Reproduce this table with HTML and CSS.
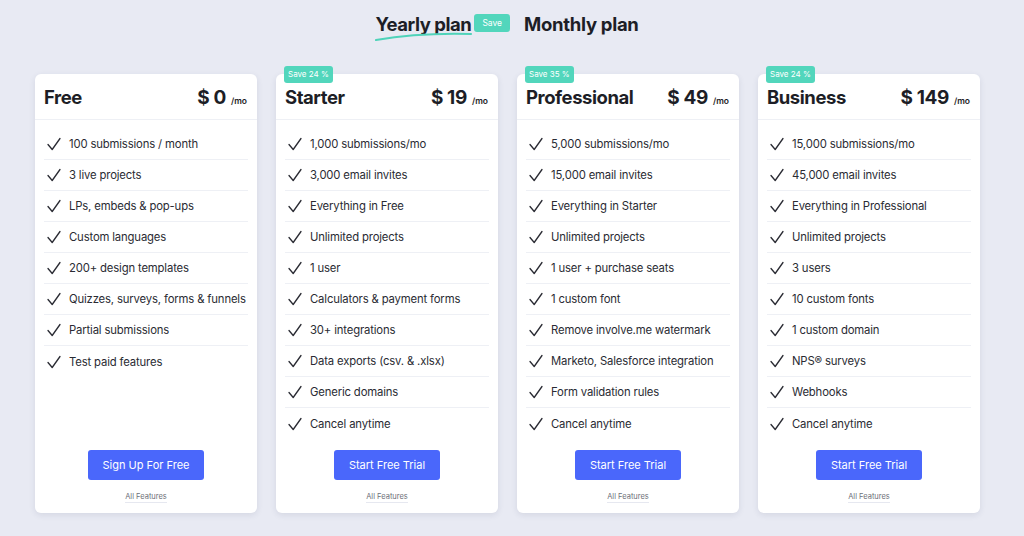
FILE: index.html
```html
<!DOCTYPE html>
<html>
<head>
<meta charset="utf-8">
<link rel="stylesheet" href="styles.css">
</head>
<body>
<div class="page">
  <div class="toggle">
    <div class="opt active">
      <span class="opt-label">Yearly plan</span>
      <svg class="swoosh" width="98" height="10" viewBox="0 0 98 10"><path d="M1 8 C 30 3, 60 1, 96 2" fill="none" stroke="#4fd3b9" stroke-width="2.2" stroke-linecap="round"/></svg>
    </div>
    <span class="save-pill">Save</span>
    <div class="opt"><span class="opt-label">Monthly plan</span></div>
  </div>

  <div class="cards">
    <div class="card">
      <div class="card-head">
        <span class="plan">Free</span>
        <span class="price">$ 0 <small>/mo</small></span>
      </div>
      <ul class="features">
        <li><svg class="chk" viewBox="0 0 14 14"><path d="M1 7.5 L5.2 12.5 L13 1.5"/></svg>100 submissions / month</li>
        <li><svg class="chk" viewBox="0 0 14 14"><path d="M1 7.5 L5.2 12.5 L13 1.5"/></svg>3 live projects</li>
        <li><svg class="chk" viewBox="0 0 14 14"><path d="M1 7.5 L5.2 12.5 L13 1.5"/></svg>LPs, embeds &amp; pop-ups</li>
        <li><svg class="chk" viewBox="0 0 14 14"><path d="M1 7.5 L5.2 12.5 L13 1.5"/></svg>Custom languages</li>
        <li><svg class="chk" viewBox="0 0 14 14"><path d="M1 7.5 L5.2 12.5 L13 1.5"/></svg>200+ design templates</li>
        <li><svg class="chk" viewBox="0 0 14 14"><path d="M1 7.5 L5.2 12.5 L13 1.5"/></svg>Quizzes, surveys, forms &amp; funnels</li>
        <li><svg class="chk" viewBox="0 0 14 14"><path d="M1 7.5 L5.2 12.5 L13 1.5"/></svg>Partial submissions</li>
        <li><svg class="chk" viewBox="0 0 14 14"><path d="M1 7.5 L5.2 12.5 L13 1.5"/></svg>Test paid features</li>
      </ul>
      <div class="card-foot">
        <a class="btn">Sign Up For Free</a>
        <a class="all">All Features</a>
      </div>
    </div>

    <div class="card">
      <span class="badge">Save 24 %</span>
      <div class="card-head">
        <span class="plan">Starter</span>
        <span class="price">$ 19 <small>/mo</small></span>
      </div>
      <ul class="features">
        <li><svg class="chk" viewBox="0 0 14 14"><path d="M1 7.5 L5.2 12.5 L13 1.5"/></svg>1,000 submissions/mo</li>
        <li><svg class="chk" viewBox="0 0 14 14"><path d="M1 7.5 L5.2 12.5 L13 1.5"/></svg>3,000 email invites</li>
        <li><svg class="chk" viewBox="0 0 14 14"><path d="M1 7.5 L5.2 12.5 L13 1.5"/></svg>Everything in Free</li>
        <li><svg class="chk" viewBox="0 0 14 14"><path d="M1 7.5 L5.2 12.5 L13 1.5"/></svg>Unlimited projects</li>
        <li><svg class="chk" viewBox="0 0 14 14"><path d="M1 7.5 L5.2 12.5 L13 1.5"/></svg>1 user</li>
        <li><svg class="chk" viewBox="0 0 14 14"><path d="M1 7.5 L5.2 12.5 L13 1.5"/></svg>Calculators &amp; payment forms</li>
        <li><svg class="chk" viewBox="0 0 14 14"><path d="M1 7.5 L5.2 12.5 L13 1.5"/></svg>30+ integrations</li>
        <li><svg class="chk" viewBox="0 0 14 14"><path d="M1 7.5 L5.2 12.5 L13 1.5"/></svg>Data exports (csv. &amp; .xlsx)</li>
        <li><svg class="chk" viewBox="0 0 14 14"><path d="M1 7.5 L5.2 12.5 L13 1.5"/></svg>Generic domains</li>
        <li><svg class="chk" viewBox="0 0 14 14"><path d="M1 7.5 L5.2 12.5 L13 1.5"/></svg>Cancel anytime</li>
      </ul>
      <div class="card-foot">
        <a class="btn">Start Free Trial</a>
        <a class="all">All Features</a>
      </div>
    </div>

    <div class="card">
      <span class="badge">Save 35 %</span>
      <div class="card-head">
        <span class="plan">Professional</span>
        <span class="price">$ 49 <small>/mo</small></span>
      </div>
      <ul class="features">
        <li><svg class="chk" viewBox="0 0 14 14"><path d="M1 7.5 L5.2 12.5 L13 1.5"/></svg>5,000 submissions/mo</li>
        <li><svg class="chk" viewBox="0 0 14 14"><path d="M1 7.5 L5.2 12.5 L13 1.5"/></svg>15,000 email invites</li>
        <li><svg class="chk" viewBox="0 0 14 14"><path d="M1 7.5 L5.2 12.5 L13 1.5"/></svg>Everything in Starter</li>
        <li><svg class="chk" viewBox="0 0 14 14"><path d="M1 7.5 L5.2 12.5 L13 1.5"/></svg>Unlimited projects</li>
        <li><svg class="chk" viewBox="0 0 14 14"><path d="M1 7.5 L5.2 12.5 L13 1.5"/></svg>1 user + purchase seats</li>
        <li><svg class="chk" viewBox="0 0 14 14"><path d="M1 7.5 L5.2 12.5 L13 1.5"/></svg>1 custom font</li>
        <li><svg class="chk" viewBox="0 0 14 14"><path d="M1 7.5 L5.2 12.5 L13 1.5"/></svg>Remove involve.me watermark</li>
        <li><svg class="chk" viewBox="0 0 14 14"><path d="M1 7.5 L5.2 12.5 L13 1.5"/></svg>Marketo, Salesforce integration</li>
        <li><svg class="chk" viewBox="0 0 14 14"><path d="M1 7.5 L5.2 12.5 L13 1.5"/></svg>Form validation rules</li>
        <li><svg class="chk" viewBox="0 0 14 14"><path d="M1 7.5 L5.2 12.5 L13 1.5"/></svg>Cancel anytime</li>
      </ul>
      <div class="card-foot">
        <a class="btn">Start Free Trial</a>
        <a class="all">All Features</a>
      </div>
    </div>

    <div class="card">
      <span class="badge">Save 24 %</span>
      <div class="card-head">
        <span class="plan">Business</span>
        <span class="price">$ 149 <small>/mo</small></span>
      </div>
      <ul class="features">
        <li><svg class="chk" viewBox="0 0 14 14"><path d="M1 7.5 L5.2 12.5 L13 1.5"/></svg>15,000 submissions/mo</li>
        <li><svg class="chk" viewBox="0 0 14 14"><path d="M1 7.5 L5.2 12.5 L13 1.5"/></svg>45,000 email invites</li>
        <li><svg class="chk" viewBox="0 0 14 14"><path d="M1 7.5 L5.2 12.5 L13 1.5"/></svg>Everything in Professional</li>
        <li><svg class="chk" viewBox="0 0 14 14"><path d="M1 7.5 L5.2 12.5 L13 1.5"/></svg>Unlimited projects</li>
        <li><svg class="chk" viewBox="0 0 14 14"><path d="M1 7.5 L5.2 12.5 L13 1.5"/></svg>3 users</li>
        <li><svg class="chk" viewBox="0 0 14 14"><path d="M1 7.5 L5.2 12.5 L13 1.5"/></svg>10 custom fonts</li>
        <li><svg class="chk" viewBox="0 0 14 14"><path d="M1 7.5 L5.2 12.5 L13 1.5"/></svg>1 custom domain</li>
        <li><svg class="chk" viewBox="0 0 14 14"><path d="M1 7.5 L5.2 12.5 L13 1.5"/></svg>NPS® surveys</li>
        <li><svg class="chk" viewBox="0 0 14 14"><path d="M1 7.5 L5.2 12.5 L13 1.5"/></svg>Webhooks</li>
        <li><svg class="chk" viewBox="0 0 14 14"><path d="M1 7.5 L5.2 12.5 L13 1.5"/></svg>Cancel anytime</li>
      </ul>
      <div class="card-foot">
        <a class="btn">Start Free Trial</a>
        <a class="all">All Features</a>
      </div>
    </div>
  </div>
</div>
</body>
</html>
```

FILE: styles.css
```css
* { box-sizing: border-box; }
html, body { margin: 0; padding: 0; }
body {
  background: #e8eaf3;
  font-family: Inter, "Noto Sans", sans-serif;
  color: #1d1e26;
  width: 1024px;
  height: 536px;
  overflow: hidden;
}
.page { padding-top: 12px; }

.toggle {
  display: flex;
  align-items: flex-start;
  justify-content: center;
  height: 62px;
  padding-right: 10px;
}
.opt { position: relative; }
.opt-label {
  display: block;
  font-size: 18.5px;
  font-weight: 700;
  letter-spacing: -0.45px;
  line-height: 24px;
  color: #1d1e26;
}
.opt:last-child .opt-label { letter-spacing: -0.3px; }
.swoosh { position: absolute; left: 0; top: 20px; }
.save-pill {
  margin: 2px 14px 0 3px;
  background: #52d6bc;
  color: #fff;
  font-size: 8.5px;
  line-height: 18px;
  height: 18px;
  padding: 0 8px;
  border-radius: 3px;
}

.cards {
  display: flex;
  gap: 19px;
  margin-left: 35px;
  align-items: stretch;
}
.card {
  position: relative;
  width: 222px;
  background: #fff;
  border-radius: 6px;
  box-shadow: 0 2px 6px rgba(40, 50, 90, 0.10);
  display: flex;
  flex-direction: column;
}
.badge {
  position: absolute;
  top: -8px;
  left: 8px;
  background: #52d6bc;
  color: #fff;
  font-size: 8px;
  line-height: 17px;
  height: 17px;
  padding: 0 4px;
  border-radius: 3px;
}
.card-head {
  height: 46px;
  display: flex;
  align-items: center;
  justify-content: space-between;
  padding: 1px 10px 0 9px;
  border-bottom: 1px solid #eef0f5;
}
.plan {
  font-size: 18.5px;
  font-weight: 700;
  letter-spacing: -0.45px;
}
.price {
  font-size: 19px;
  font-weight: 700;
  letter-spacing: -0.4px;
}
.price small {
  font-size: 8.5px;
  font-weight: 600;
  letter-spacing: 0;
  margin-left: 1px;
}

.features {
  list-style: none;
  margin: 0;
  padding: 9px 9px 0;
  flex: 1;
}
.features li {
  height: 31px;
  display: flex;
  align-items: center;
  font-size: 11.3px;
  letter-spacing: -0.15px;
  white-space: nowrap;
  color: #2a2b33;
  border-bottom: 1px solid #eef0f5;
}
.features li:last-child { border-bottom: none; }
.chk {
  width: 14px;
  height: 14px;
  flex: none;
  margin: 0 8px 0 3px;
  fill: none;
  stroke: #2a2b33;
  stroke-width: 1.3;
  stroke-linecap: round;
  stroke-linejoin: round;
}

.card-foot {
  display: flex;
  flex-direction: column;
  align-items: center;
  padding: 11px 0 10px;
}
.btn {
  display: block;
  background: #4a67fb;
  color: #fff;
  font-size: 11px;
  line-height: 30px;
  height: 30px;
  padding: 0 15px;
  border-radius: 3px;
}
.all {
  margin-top: 11px;
  font-size: 7.5px;
  color: #6d6f78;
  line-height: 11px;
  border-bottom: 1px solid #e6e8f0;
}
```
